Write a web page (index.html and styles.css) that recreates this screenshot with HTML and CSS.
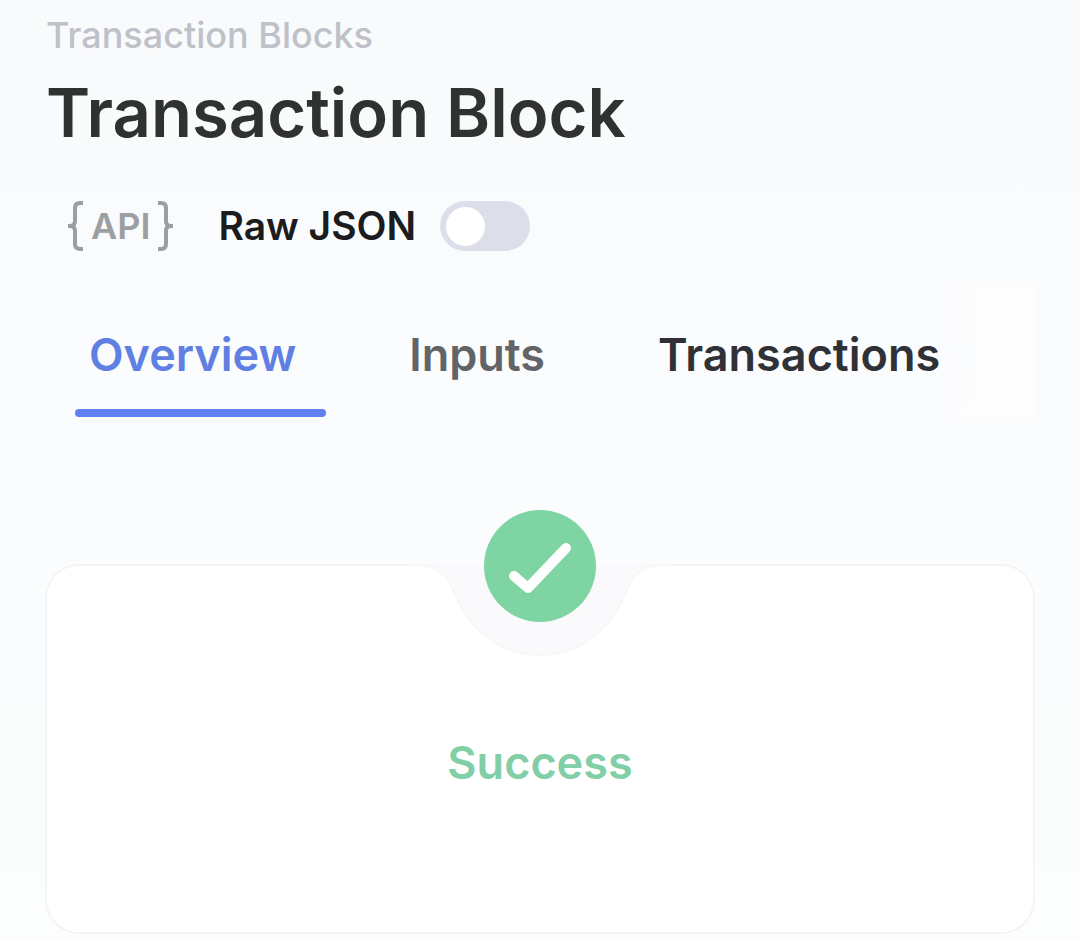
FILE: index.html
```
<!DOCTYPE html>
<html lang="en">
<head>
    <meta charset="UTF-8">
    <title>Transaction Block</title>
    <meta name="viewport" content="width=device-width, initial-scale=1.0">
    <link rel="stylesheet" href="styles.css">
</head>
<body>
    <main class="page">
        <a class="breadcrumb" href="#">Transaction Blocks</a>
        <h1>Transaction Block</h1>

        <div class="tools">
            <button type="button" class="api-button">
                <svg class="brace" viewBox="0 0 16 50" aria-hidden="true">
                    <path d="M15 2h-3q-5 0-5 5v13q0 5-5 5q5 0 5 5v13q0 5 5 5h3"/>
                    <path d="M0 25h5"/>
                </svg>
                <span>API</span>
                <svg class="brace" viewBox="0 0 16 50" aria-hidden="true">
                    <path d="M1 2h3q5 0 5 5v13q0 5 5 5q-5 0-5 5v13q0 5-5 5h-3"/>
                    <path d="M11 25h5"/>
                </svg>
            </button>
            <label for="raw-json">Raw JSON</label>
            <input type="checkbox" id="raw-json" class="switch">
        </div>

        <div class="tabs" role="tablist">
            <button type="button" class="tab active" role="tab" aria-selected="true">Overview</button>
            <button type="button" class="tab" role="tab" aria-selected="false">Inputs</button>
            <button type="button" class="tab tab-dark" role="tab" aria-selected="false">Transactions</button>
        </div>

        <section class="card">
            <!-- notch in the top edge, with the status icon inside -->
            <svg class="notch" viewBox="0 0 260 150" aria-hidden="true">
                <path class="notch-fill" d="M0 53V55H8C26 55 36 63 44 82C60 122 92 145 130 145S200 122 216 82C224 63 234 55 252 55H260V53Z"/>
                <path class="notch-line" d="M0 55H8C26 55 36 63 44 82C60 122 92 145 130 145S200 122 216 82C224 63 234 55 252 55H260"/>
                <circle cx="130" cy="56" r="56"/>
                <path class="check" d="M104 66L118 78L156 38"/>
            </svg>
            <p class="status">Success</p>
        </section>
    </main>
</body>
</html>
```
FILE: styles.css
```
body {
    margin: 0;
    min-height: 100vh;
    background: linear-gradient(#f9fafc, #fafcfe 50%, #fcfdfd);
    font-family: Inter, "Liberation Sans", sans-serif;
    color: #303133;
}
button {
    padding: 0;
    border: none;
    background: none;
    font-family: inherit;
    cursor: pointer;
}
.page {
    display: flex;
    flex-direction: column;
    padding: 13px 45px 6px;
}
.breadcrumb {
    align-self: flex-start;
    padding-left: 1px;
    font-size: 36px;
    font-weight: 500;
    line-height: 44px;
    color: #bec1c8;
    text-decoration: none;
}
h1 {
    margin: 16px 0 0;
    padding-left: 1px;
    font-size: 67px;
    font-weight: 600;
    line-height: 80px;
    color: #303232;
}
.tools {
    display: flex;
    align-items: center;
    margin-top: 48px;
    padding-left: 23px;
}
.api-button {
    display: flex;
    align-items: center;
    gap: 7px;
    font-size: 36px;
    font-weight: 600;
    line-height: 50px;
    color: #9c9ea2;
}
.brace {
    width: 16px;
    height: 50px;
    fill: none;
    stroke: currentColor;
    stroke-width: 4;
}
.tools label {
    margin: 0 24px 0 45px;
    font-size: 39px;
    font-weight: 600;
    line-height: 48px;
    color: #1b1c1e;
}
.switch {
    appearance: none;
    display: flex;
    align-items: center;
    width: 90px;
    height: 50px;
    margin: 0;
    padding: 0 6px;
    box-sizing: border-box;
    border-radius: 25px;
    background: #dcdfe9;
    cursor: pointer;
}
.switch::before {
    content: "";
    width: 39px;
    height: 39px;
    border-radius: 50%;
    background: #fff;
}
.switch:checked {
    background: #5f82ee;
}
.switch:checked::before {
    margin-left: auto;
}
.tabs {
    display: flex;
    gap: 69px;
    margin-top: 36px;
    padding: 0 30px;
    background: linear-gradient(to right, rgba(255, 255, 255, 0) 90%, #fefefe 98%);
}
.tab {
    padding: 40px 30px 26px 14px;
    border-bottom: 8px solid transparent;
    font-size: 45px;
    font-weight: 600;
    line-height: 56px;
    color: #636467;
}
.tab.active {
    position: relative;
    color: #5f80e2;
}
.tab.active::after {
    content: "";
    position: absolute;
    left: 0;
    right: 0;
    bottom: -8px;
    height: 8px;
    border-radius: 4px;
    background: #6080ef;
}
.tab-dark {
    color: #303136;
}
.card {
    position: relative;
    display: flex;
    align-items: center;
    justify-content: center;
    min-height: 366px;
    margin-top: 147px;
    border: 2px solid #f3f4f5;
    border-radius: 34px;
    background: #fff;
}
.notch {
    position: absolute;
    top: -56px;
    left: calc(50% - 130px);
    width: 260px;
    height: 150px;
}
.notch-fill {
    fill: #fafafd;
}
.notch-line {
    fill: none;
    stroke: #f7f7f9;
    stroke-width: 2;
}
.notch circle {
    fill: #7ed5a3;
}
.check {
    fill: none;
    stroke: #fff;
    stroke-width: 10;
    stroke-linecap: round;
    stroke-linejoin: round;
}
.status {
    margin: 28px 0 0;
    font-size: 45px;
    font-weight: 600;
    line-height: 56px;
    color: #82cfa7;
}
```
